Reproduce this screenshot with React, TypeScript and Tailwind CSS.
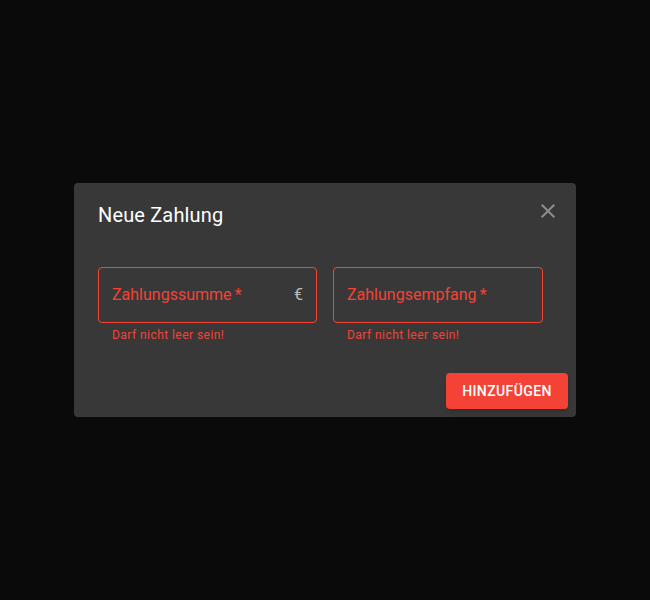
function Field({ label, width, adornment }: { label: string; width: string; adornment?: string }) {
    return (
        <div className={`flex flex-col ${width}`}>
            <div className="h-[56px] border border-[#f44336] rounded-[4px] flex items-center pl-[13px] pr-[13px]">
                <span className="flex-1 text-[16px] text-[#f44336]">{label}&thinsp;*</span>
                {adornment && <span className="text-[16px] text-[#bdbdbd]">{adornment}</span>}
            </div>
            <span className="mt-[2px] ml-[14px] text-[12px] leading-[20px] text-[#f44336] tracking-[0.45px]">Darf nicht leer sein!</span>
        </div>
    );
}

export default function App() {
    return (
        <div className="w-[650px] h-[600px] bg-[#0a0a0a] flex items-start justify-center pt-[183px] font-['Roboto',sans-serif]">
            <div className="w-[502px] h-[234px] bg-[#383838] rounded-[4px] flex flex-col">
                <div className="flex items-start justify-between pl-[24px] pr-[16px] pt-[20px]">
                    <h2 className="text-[20px] leading-[24px] font-normal text-white tracking-[0.15px]">Neue Zahlung</h2>
                    <button className="mt-[-4px] text-[#8c8c8c]">
                        <svg viewBox="0 0 24 24" className="h-[24px] w-[24px]" fill="currentColor">
                            <path d="M19 6.41L17.59 5 12 10.59 6.41 5 5 6.41 10.59 12 5 17.59 6.41 19 12 13.41 17.59 19 19 17.59 13.41 12z" />
                        </svg>
                    </button>
                </div>
                <div className="flex gap-[16px] pl-[24px] pt-[40px]">
                    <Field label="Zahlungssumme" width="w-[219px]" adornment="€" />
                    <Field label="Zahlungsempfang" width="w-[210px]" />
                </div>
                <div className="flex justify-end pr-[8px] pt-[28px]">
                    <button className="h-[36px] w-[122px] bg-[#f44336] rounded-[4px] text-white text-[14px] font-medium uppercase tracking-[0.4px] shadow-md">
                        Hinzufügen
                    </button>
                </div>
            </div>
        </div>
    );
}
